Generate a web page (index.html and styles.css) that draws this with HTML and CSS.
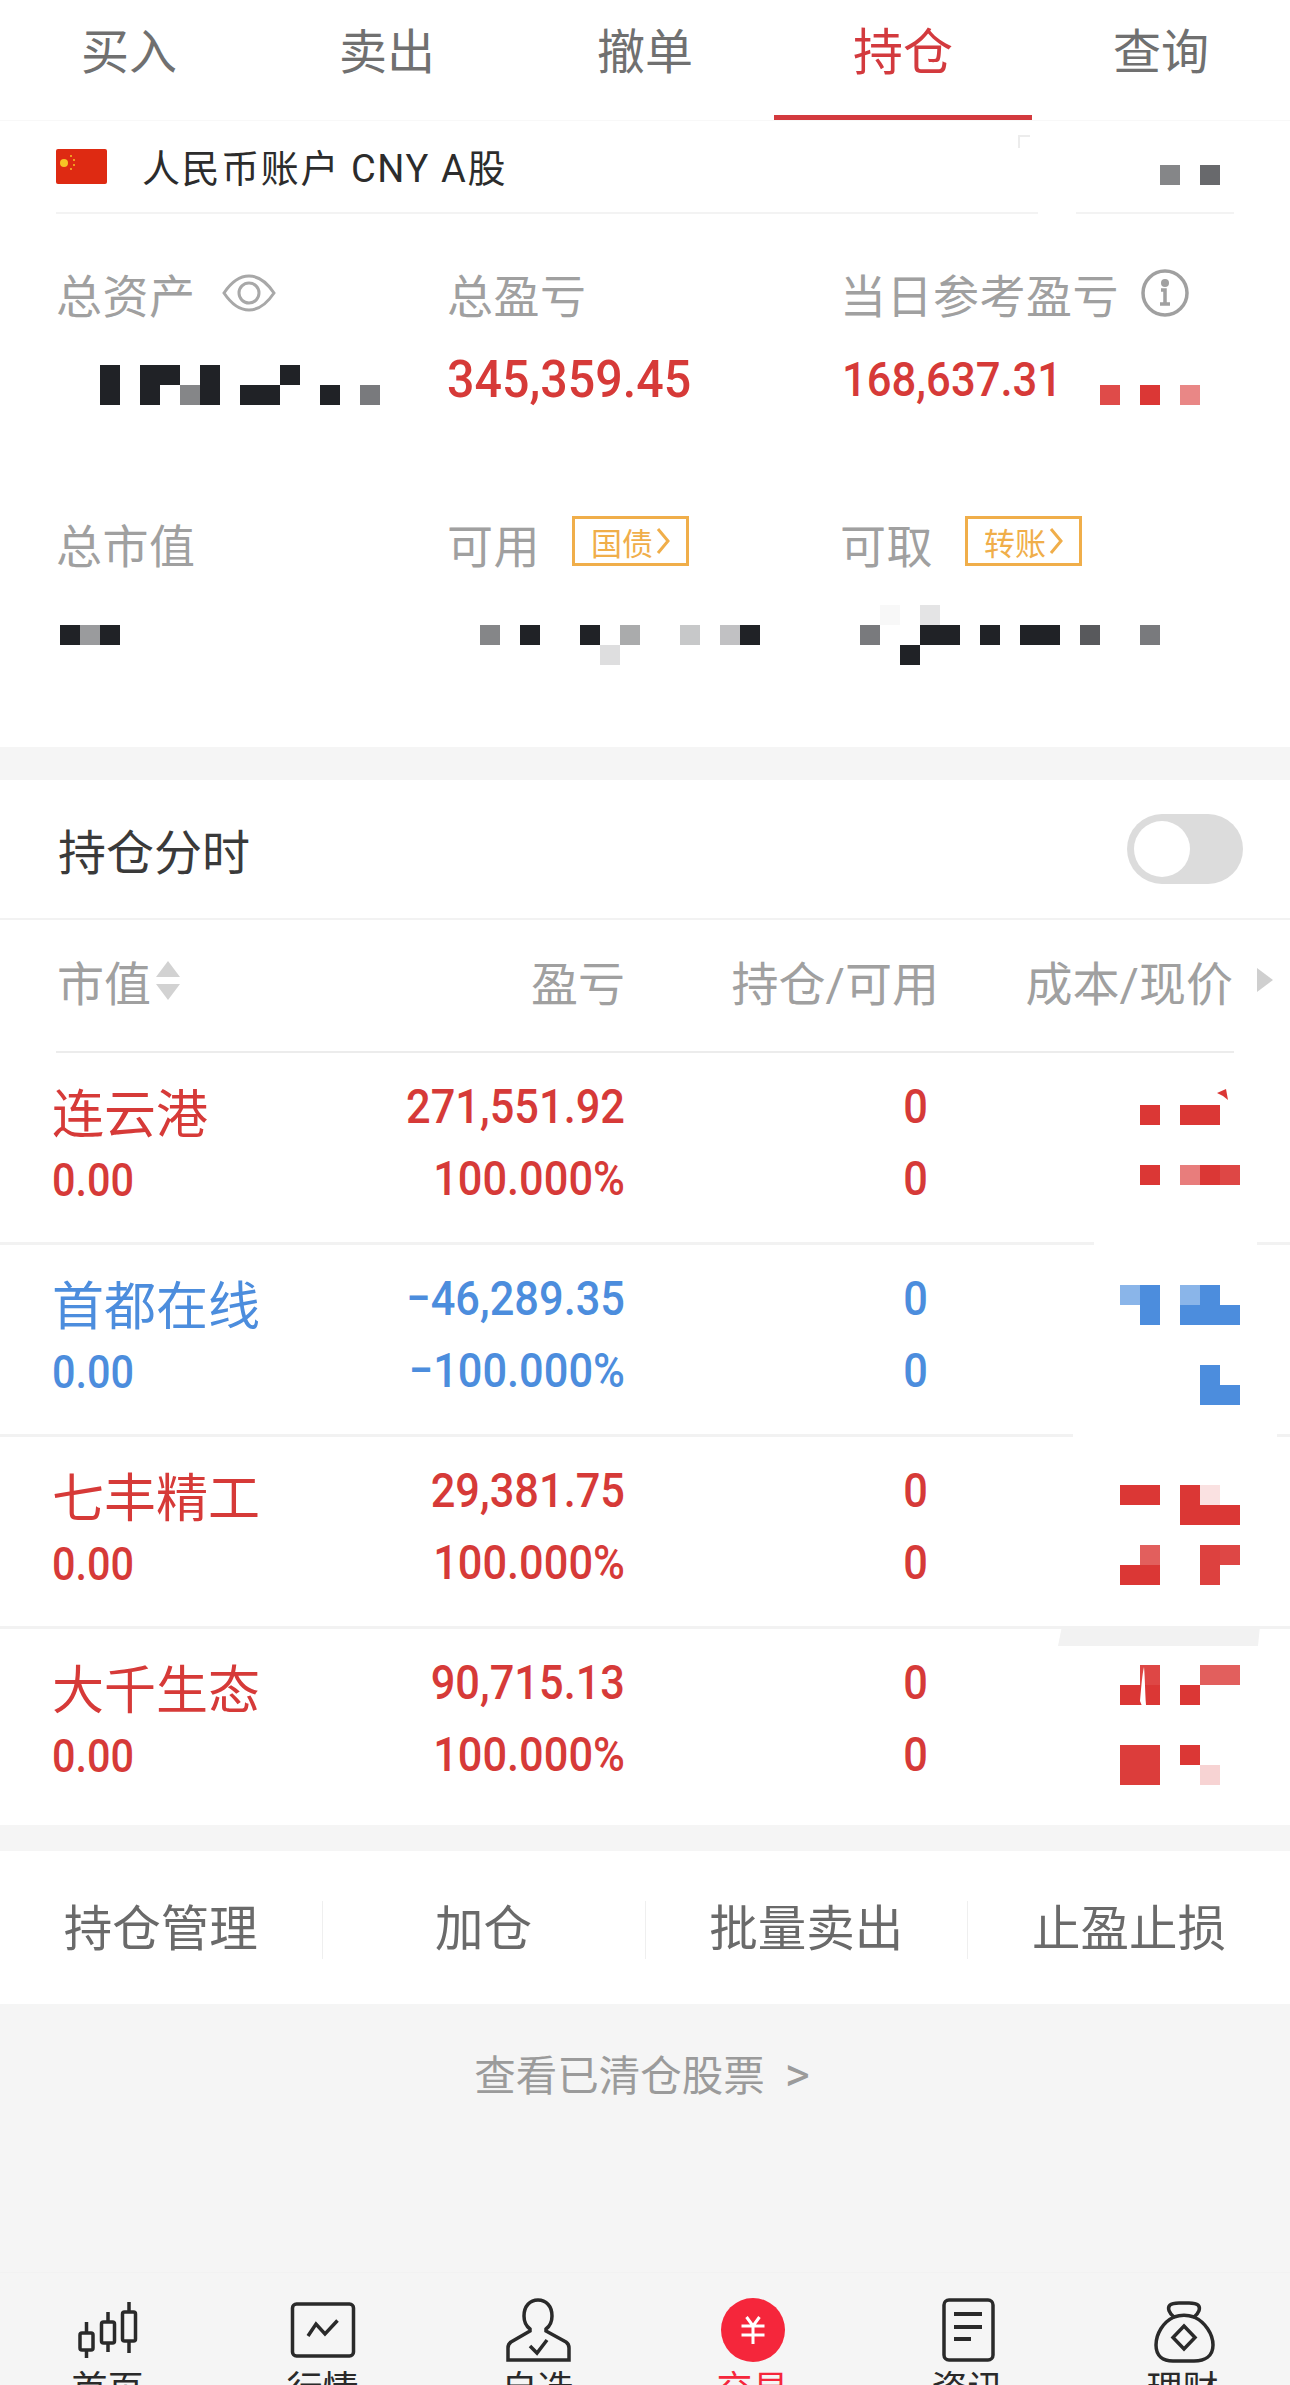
FILE: index.html
```html
<!DOCTYPE html>
<html lang="zh">
<head>
<meta charset="utf-8">
<title>持仓</title>
<link rel="stylesheet" href="styles.css">
</head>
<body>

<nav class="tabs">
  <a class="tab">买入</a>
  <a class="tab">卖出</a>
  <a class="tab">撤单</a>
  <a class="tab tab-active">持仓</a>
  <a class="tab">查询</a>
</nav>

<div class="account">
  <svg class="flag" viewBox="0 0 51 35">
    <rect class="flag-bg" width="51" height="35" rx="2"/>
    <circle class="flag-star" cx="8" cy="14" r="4"/>
    <circle class="flag-star" cx="15" cy="7" r="1"/>
    <circle class="flag-star" cx="18" cy="11" r="1"/>
    <circle class="flag-star" cx="18" cy="16" r="1"/>
    <circle class="flag-star" cx="15" cy="20" r="1"/>
  </svg>
  <span class="account-name">人民币账户 CNY A股</span>
  <svg class="mosaic mosaic-dark account-mosaic" width="202" height="50" viewBox="0 0 202 50">
    <path class="corner" d="M12 1H1V13"/>
    <rect x="142" y="30" width="20" height="20" fill-opacity=".55"/>
    <rect x="182" y="30" width="20" height="20" fill-opacity=".68"/>
  </svg>
</div>

<section class="summary">
  <div class="stat">
    <div class="stat-label">总资产
      <svg class="icon-eye" width="54" height="38" viewBox="0 0 54 38">
        <path d="M2 19C10 7 18 2 27 2s17 5 25 17c-8 12-16 17-25 17S10 31 2 19z"/>
        <circle cx="27" cy="19" r="10"/>
      </svg>
    </div>
    <div class="stat-value">
      <svg class="mosaic mosaic-dark mosaic-assets" width="280" height="60" viewBox="0 0 280 60">
        <rect x="0" y="15" width="20" height="40"/>
        <rect x="40" y="15" width="40" height="20"/>
        <rect x="40" y="35" width="20" height="20"/>
        <rect x="80" y="35" width="20" height="20" fill-opacity=".55"/>
        <rect x="100" y="15" width="20" height="40"/>
        <rect x="140" y="35" width="40" height="20"/>
        <rect x="180" y="15" width="20" height="20"/>
        <rect x="220" y="35" width="20" height="20"/>
        <rect x="260" y="35" width="20" height="20" fill-opacity=".6"/>
      </svg>
    </div>
  </div>
  <div class="stat">
    <div class="stat-label">总盈亏</div>
    <div class="stat-value"><span class="num-big">345,359.45</span></div>
  </div>
  <div class="stat">
    <div class="stat-label">当日参考盈亏
      <svg class="icon-info" width="48" height="48" viewBox="0 0 48 48">
        <circle cx="24" cy="24" r="22"/>
        <circle class="info-dot" cx="24" cy="14" r="4"/>
        <path d="M20 21h4v13M19 35h10"/>
      </svg>
    </div>
    <div class="stat-value"><span class="num-day">168,637.31</span>
      <svg class="mosaic mosaic-red" width="100" height="60" viewBox="0 0 100 60">
        <rect x="0" y="35" width="20" height="20" fill-opacity=".9"/>
        <rect x="40" y="35" width="20" height="20"/>
        <rect x="80" y="35" width="20" height="20" fill-opacity=".6"/>
      </svg>
    </div>
  </div>
  <div class="stat">
    <div class="stat-label">总市值</div>
    <div class="stat-value">
      <svg class="mosaic mosaic-dark mosaic-cap" width="60" height="60" viewBox="0 0 60 60">
        <rect x="0" y="20" width="20" height="20"/>
        <rect x="20" y="20" width="20" height="20" fill-opacity=".45"/>
        <rect x="40" y="20" width="20" height="20"/>
      </svg>
    </div>
  </div>
  <div class="stat">
    <div class="stat-label">可用
      <span class="tag">国债<svg width="14" height="28" viewBox="0 0 14 28"><path d="M2 2l10 12L2 26"/></svg></span>
    </div>
    <div class="stat-value">
      <svg class="mosaic mosaic-dark mosaic-avail" width="280" height="60" viewBox="0 0 280 60">
        <rect x="0" y="20" width="20" height="20" fill-opacity=".55"/>
        <rect x="40" y="20" width="20" height="20"/>
        <rect x="100" y="20" width="20" height="20"/>
        <rect x="140" y="20" width="20" height="20" fill-opacity=".38"/>
        <rect x="120" y="40" width="20" height="20" fill-opacity=".15"/>
        <rect x="200" y="20" width="20" height="20" fill-opacity=".25"/>
        <rect x="240" y="20" width="20" height="20" fill-opacity=".28"/>
        <rect x="260" y="20" width="20" height="20"/>
      </svg>
    </div>
  </div>
  <div class="stat">
    <div class="stat-label">可取
      <span class="tag">转账<svg width="14" height="28" viewBox="0 0 14 28"><path d="M2 2l10 12L2 26"/></svg></span>
    </div>
    <div class="stat-value">
      <svg class="mosaic mosaic-dark mosaic-draw" width="300" height="60" viewBox="0 0 300 60">
        <rect x="20" y="0" width="20" height="20" fill-opacity=".03"/>
        <rect x="60" y="0" width="20" height="20" fill-opacity=".12"/>
        <rect x="0" y="20" width="20" height="20" fill-opacity=".6"/>
        <rect x="60" y="20" width="40" height="20"/>
        <rect x="40" y="40" width="20" height="20"/>
        <rect x="120" y="20" width="20" height="20"/>
        <rect x="160" y="20" width="40" height="20"/>
        <rect x="220" y="20" width="20" height="20" fill-opacity=".75"/>
        <rect x="280" y="20" width="20" height="20" fill-opacity=".6"/>
      </svg>
    </div>
  </div>
</section>

<section class="holdings">
  <div class="switch-row">
    <span>持仓分时</span>
    <span class="switch"><span class="switch-knob"></span></span>
  </div>

  <div class="table-head">
    <div class="col-name">市值<span class="sort"><i class="sort-up"></i><i class="sort-down"></i></span></div>
    <div class="col-value">盈亏</div>
    <div class="col-hold">持仓/可用</div>
    <div class="col-cost">成本/现价<i class="more"></i></div>
  </div>

  <div class="stock up wipe-a">
    <div class="col-name"><div class="stock-name">连云港</div><div class="stock-cap">0.00</div></div>
    <div class="col-value"><div>271,551.92</div><div>100.000%</div></div>
    <div class="col-hold"><div>0</div><div>0</div></div>
    <svg class="mosaic mosaic-red stock-mosaic" width="120" height="140" viewBox="0 0 120 140">
      <path d="M97 20l9-4 2 11-5-4z"/>
      <rect x="20" y="32" width="20" height="20"/>
      <rect x="60" y="32" width="40" height="20"/>
      <rect x="20" y="92" width="20" height="20"/>
      <rect x="60" y="92" width="20" height="20" fill-opacity=".65"/>
      <rect x="80" y="92" width="20" height="20"/>
      <rect x="100" y="92" width="20" height="20" fill-opacity=".92"/>
    </svg>
  </div>

  <div class="stock down wipe-b">
    <div class="col-name"><div class="stock-name">首都在线</div><div class="stock-cap">0.00</div></div>
    <div class="col-value"><div>−46,289.35</div><div>−100.000%</div></div>
    <div class="col-hold"><div>0</div><div>0</div></div>
    <svg class="mosaic mosaic-blue stock-mosaic" width="120" height="140" viewBox="0 0 120 140">
      <rect x="0" y="20" width="20" height="20" fill-opacity=".65"/>
      <rect x="20" y="20" width="20" height="40"/>
      <rect x="60" y="20" width="20" height="20" fill-opacity=".65"/>
      <rect x="80" y="20" width="20" height="20"/>
      <rect x="60" y="40" width="60" height="20"/>
      <rect x="80" y="100" width="20" height="40"/>
      <rect x="100" y="120" width="20" height="20"/>
    </svg>
  </div>

  <div class="stock up wipe-c">
    <div class="col-name"><div class="stock-name">七丰精工</div><div class="stock-cap">0.00</div></div>
    <div class="col-value"><div>29,381.75</div><div>100.000%</div></div>
    <div class="col-hold"><div>0</div><div>0</div></div>
    <svg class="mosaic mosaic-red stock-mosaic" width="120" height="140" viewBox="0 0 120 140">
      <rect x="0" y="28" width="40" height="20"/>
      <rect x="60" y="28" width="20" height="20"/>
      <rect x="80" y="28" width="20" height="20" fill-opacity=".15"/>
      <rect x="60" y="48" width="60" height="20"/>
      <rect x="20" y="88" width="20" height="20" fill-opacity=".8"/>
      <rect x="0" y="108" width="40" height="20"/>
      <rect x="80" y="88" width="20" height="40" fill-opacity=".95"/>
      <rect x="100" y="88" width="20" height="20" fill-opacity=".92"/>
    </svg>
  </div>

  <div class="stock stock-last up">
    <div class="col-name"><div class="stock-name">大千生态</div><div class="stock-cap">0.00</div></div>
    <div class="col-value"><div>90,715.13</div><div>100.000%</div></div>
    <div class="col-hold"><div>0</div><div>0</div></div>
    <svg class="mosaic mosaic-red stock-mosaic" width="120" height="140" viewBox="0 0 120 140">
      <rect x="20" y="16" width="20" height="20" fill-opacity=".92"/>
      <rect x="0" y="36" width="40" height="20"/>
      <path class="sliver" d="M24 18c-2 8-3 24-4 34l2 5 4-1c-1-14-1-28-2-38z"/>
      <rect x="60" y="36" width="20" height="20"/>
      <rect x="80" y="16" width="40" height="20" fill-opacity=".8"/>
      <rect x="0" y="96" width="40" height="40" fill-opacity=".97"/>
      <rect x="60" y="96" width="20" height="20"/>
      <rect x="80" y="116" width="20" height="20" fill-opacity=".22"/>
    </svg>
  </div>
</section>

<div class="actions">
  <a class="action">持仓管理</a>
  <a class="action">加仓</a>
  <a class="action">批量卖出</a>
  <a class="action">止盈止损</a>
</div>

<div class="cleared"><a>查看已清仓股票<span class="cleared-arrow">&gt;</span></a></div>

<footer class="bottom-nav">
  <a class="nav-item">
    <svg class="nav-icon" width="64" height="64" viewBox="0 0 64 64">
      <path d="M10.5 24v36M32 14v40M53 4v51"/>
      <rect class="nav-fill" x="4" y="35" width="13" height="17" rx="2"/>
      <rect class="nav-fill" x="25.5" y="24" width="13" height="21" rx="2"/>
      <rect class="nav-fill" x="46.5" y="14" width="13" height="29" rx="2"/>
    </svg>
    首页
  </a>
  <a class="nav-item">
    <svg class="nav-icon" width="64" height="64" viewBox="0 0 64 64">
      <rect x="1.5" y="6" width="61" height="52" rx="4"/>
      <path d="M17 38l8-12 9 10 12.500-13.500"/>
    </svg>
    行情
  </a>
  <a class="nav-item">
    <svg class="nav-icon" width="64" height="64" viewBox="0 0 64 64">
      <path d="M24 31c-4-3-6-7-6-13C18 8 24 2 32 2s14 6 14 16c0 6-2 10-6 13v2l20 11q3 2 3 6v12H2V50q0-4 3-6l19-11z"/>
      <path d="M24 48l7 7 10-13"/>
    </svg>
    自选
  </a>
  <a class="nav-item nav-active">
    <svg class="nav-icon" width="64" height="64" viewBox="0 0 64 64">
      <circle class="yen-disc" cx="32" cy="32" r="32"/>
      <path class="yen" d="M25.500 19L32 28l6.500-9M20.500 28h23M20.500 37h23M32 28v18"/>
    </svg>
    交易
  </a>
  <a class="nav-item">
    <svg class="nav-icon" width="64" height="64" viewBox="0 0 64 64">
      <rect x="8" y="2" width="49" height="60" rx="5"/>
      <path class="doc-lines" d="M18 16h28M18 29h28M18 41h17"/>
    </svg>
    资讯
  </a>
  <a class="nav-item">
    <svg class="nav-icon" width="64" height="64" viewBox="0 0 64 64">
      <path d="M23 19C12 24 5 36 5 47c0 11 7 16 17 16h21c11 0 19-5 19-16 0-11-8-23-19-28"/>
      <path d="M23 19C18 15 16 10 19 7c3-3 9-2 14-2s11-1 14 2c3 3 1 8-4 12-6-2-14-2-20 0z"/>
      <path d="M33 28l11 11.500L33 51 22 39.500z"/>
    </svg>
    理财
  </a>
</footer>

</body>
</html>
```

FILE: styles.css
```css
html, body {
  margin: 0;
  height: 2385px;
  overflow: hidden;
}
body {
  width: 1290px;
  background: #f5f5f5;
  color: #333;
  font-family: Roboto, "Noto Sans CJK SC", sans-serif;
}
svg {
  display: block;
}

/* top tabs */
.tabs {
  display: flex;
  height: 120px;
  background: #fff;
  border-bottom: 1px solid #f8f8f8;
}
.tab {
  flex: 1;
  height: 115px;
  line-height: 106px;
  text-align: center;
  font-size: 48px;
  color: #707070;
}
.tab-active {
  color: #d33a3e;
  font-size: 50px;
  border-bottom: 5px solid #d33a3e;
}

/* account line */
.account {
  position: relative;
  display: flex;
  align-items: center;
  gap: 35px;
  height: 93px;
  padding: 0 56px;
  background: #fff;
}
.account::after {
  content: "";
  position: absolute;
  left: 56px;
  right: 56px;
  bottom: 0;
  border-bottom: 2px solid #f3f3f3;
}
.account::before {
  content: "";
  position: absolute;
  z-index: 1;
  left: 1038px;
  width: 38px;
  bottom: 0;
  height: 2px;
  background: #fff;
}
.flag {
  width: 51px;
  height: 35px;
  margin-top: -3px;
}
.flag-bg { fill: #de2a12; }
.flag-star { fill: #f7c325; }
.account-name {
  margin-top: -4px;
  font-size: 38px;
  letter-spacing: 1.600px;
  color: #2c2c2c;
}
.account-mosaic {
  margin-left: auto;
  margin-right: 14px;
  align-self: flex-start;
  margin-top: 14px;
}
.corner {
  fill: none;
  stroke: #ececec;
  stroke-width: 2;
}

/* pixel blocks standing in for hidden figures */
.mosaic-dark { fill: #202226; }
.mosaic-red { fill: #db3735; }
.mosaic-blue { fill: #4c8ddd; }
.sliver { fill: #fff; }

/* account summary */
.summary {
  display: grid;
  grid-template-columns: 391px 393px 1fr;
  grid-auto-rows: 147px;
  row-gap: 103px;
  box-sizing: border-box;
  height: 533px;
  padding: 49px 0 0 56px;
  background: #fff;
}
.stat-label {
  display: flex;
  align-items: center;
  height: 60px;
  font-size: 46px;
  letter-spacing: .5px;
  color: #a0a0a0;
}
.stat-value {
  display: flex;
  height: 60px;
  margin-top: 27px;
  line-height: 60px;
  color: #d63a38;
  font-weight: 500;
}
.num-big,
.num-day {
  display: block;
  flex: none;
  transform-origin: left center;
}
.num-big {
  font-size: 52px;
  transform: scaleX(.93);
}
.num-day {
  width: 258px;
  margin-left: 2px;
  font-size: 49px;
  transform: scaleX(.89);
}
.icon-eye {
  margin-left: 26px;
  fill: none;
  stroke: #a8a8a8;
  stroke-width: 3;
}
.icon-info {
  margin-left: 22px;
  fill: none;
  stroke: #a0a0a0;
  stroke-width: 3.5;
}
.info-dot {
  fill: #a0a0a0;
  stroke: none;
}
.mosaic-assets { margin-left: 44px; }
.mosaic-avail { margin: 5px 0 0 33px; }
.mosaic-draw { margin: 5px 0 0 20px; }
.mosaic-cap { margin: 5px 0 0 4px; }
.tag {
  display: flex;
  align-items: center;
  justify-content: center;
  gap: 3px;
  box-sizing: border-box;
  width: 117px;
  height: 50px;
  margin-left: 32px;
  margin-top: -4px;
  border: 3px solid #f0ae4a;
  font-size: 31px;
  letter-spacing: 0;
  color: #f0ae4a;
}
.tag svg {
  fill: none;
  stroke: #f0ae4a;
  stroke-width: 3;
}

/* holdings table */
.holdings {
  margin-top: 33px;
  background: #fff;
}
.switch-row {
  display: flex;
  align-items: center;
  justify-content: space-between;
  box-sizing: border-box;
  height: 140px;
  padding: 0 47px 0 58px;
  border-bottom: 2px solid #f2f2f2;
  font-size: 48px;
  color: #3a3a3a;
}
.switch {
  display: flex;
  align-items: center;
  box-sizing: border-box;
  width: 116px;
  height: 70px;
  padding-left: 7px;
  border-radius: 35px;
  background: #dcdcdc;
}
.switch-knob {
  width: 56px;
  height: 56px;
  border-radius: 50%;
  background: #fff;
}
.table-head {
  position: relative;
  display: flex;
  align-items: center;
  box-sizing: border-box;
  height: 133px;
  padding-left: 57px;
  padding-bottom: 13px;
  font-size: 47px;
  color: #a0a0a0;
}
.table-head::after {
  content: "";
  position: absolute;
  left: 56px;
  right: 56px;
  bottom: 0;
  border-bottom: 2px solid #ececec;
}
.table-head .col-name {
  display: flex;
  align-items: center;
  width: 300px;
}
.table-head .col-value {
  width: 268px;
  text-align: right;
}
.table-head .col-hold {
  width: 314px;
  text-align: right;
}
.table-head .col-cost {
  position: relative;
  display: flex;
  align-items: center;
  justify-content: flex-end;
  width: 294px;
}
.more {
  position: absolute;
  right: -40px;
  border-left: 16px solid #cfcfcf;
  border-top: 12px solid transparent;
  border-bottom: 12px solid transparent;
}
.sort {
  display: flex;
  flex-direction: column;
  gap: 7px;
  margin-left: 5px;
}
.sort-up {
  border-bottom: 16px solid #d2d2d2;
  border-left: 12px solid transparent;
  border-right: 12px solid transparent;
}
.sort-down {
  border-top: 16px solid #d2d2d2;
  border-left: 12px solid transparent;
  border-right: 12px solid transparent;
}

.stock {
  position: relative;
  display: flex;
  box-sizing: border-box;
  height: 192px;
  padding: 21px 0 0 52px;
  border-bottom: 3px solid #f2f2f2;
  font-size: 49px;
  font-weight: 500;
}
.stock-last {
  height: 196px;
  border-bottom: 0;
}
.up { color: #d63a38; }
.down { color: #4c8ddd; }
.stock .col-name { width: 301px; }
.stock-name {
  margin-top: 3px;
  font-size: 52px;
  font-weight: 400;
  line-height: 78px;
}
.stock-cap {
  font-size: 46px;
  line-height: 51px;
  transform: scaleX(.9);
  transform-origin: left center;
}
.stock .col-value {
  width: 272px;
  line-height: 66px;
  text-align: right;
  white-space: nowrap;
}
.stock .col-value div,
.stock .col-hold div {
  transform: scaleX(.885);
  transform-origin: right center;
}
.stock .col-value div + div,
.stock .col-hold div + div {
  margin-top: 6px;
}
.stock .col-hold {
  width: 303px;
  line-height: 66px;
  text-align: right;
}
.stock-mosaic {
  margin: -1px 0 0 192px;
}

/* the divider is broken around some of the hidden cells */
.wipe-a::after,
.wipe-b::after,
.wipe-c::after {
  content: "";
  position: absolute;
}
.wipe-a::after {
  left: 1094px;
  width: 163px;
  bottom: -3px;
  height: 3px;
  background: #fff;
}
.wipe-b::after {
  left: 1073px;
  width: 204px;
  bottom: -3px;
  height: 3px;
  background: #fff;
}
.wipe-c::after {
  z-index: 1;
  left: 1058px;
  width: 202px;
  top: 189px;
  height: 20px;
  background: #f2f2f2;
  clip-path: polygon(4px 0, 100% 0, 99% 100%, 0 100%);
}

/* buttons under the table */
.actions {
  display: flex;
  align-items: center;
  box-sizing: border-box;
  height: 153px;
  margin-top: 26px;
  padding-top: 4px;
  background: #fff;
}
.action {
  flex: 1;
  height: 58px;
  line-height: 58px;
  text-align: center;
  font-size: 48.500px;
  color: #6a6a6a;
  border-left: 1px solid #efefef;
}
.action:first-child {
  border-left: 0;
}

.cleared {
  box-sizing: border-box;
  height: 268px;
  padding: 41px 6px 0 0;
  text-align: center;
  font-size: 41.500px;
  line-height: 60px;
  color: #9b9b9b;
}
.cleared-arrow {
  margin-left: 20px;
  font-size: 48px;
}

/* bottom bar, runs past the lower edge */
.bottom-nav {
  display: flex;
  padding-top: 25px;
  border-top: 1px solid #f2f2f2;
}
.nav-item {
  flex: 1;
  display: flex;
  flex-direction: column;
  align-items: center;
  font-size: 36px;
  line-height: 40px;
  color: #2a2a2a;
}
.nav-icon {
  margin-bottom: 8px;
  overflow: visible;
  fill: none;
  stroke: #2a2a2a;
  stroke-width: 3.500;
}
.nav-fill { fill: #f5f5f5; }
.doc-lines { stroke-width: 4; }
.nav-active { color: #f5263b; }
.yen-disc {
  fill: #f5263b;
  stroke: none;
}
.yen {
  stroke: #fff;
  stroke-width: 3;
}
```
